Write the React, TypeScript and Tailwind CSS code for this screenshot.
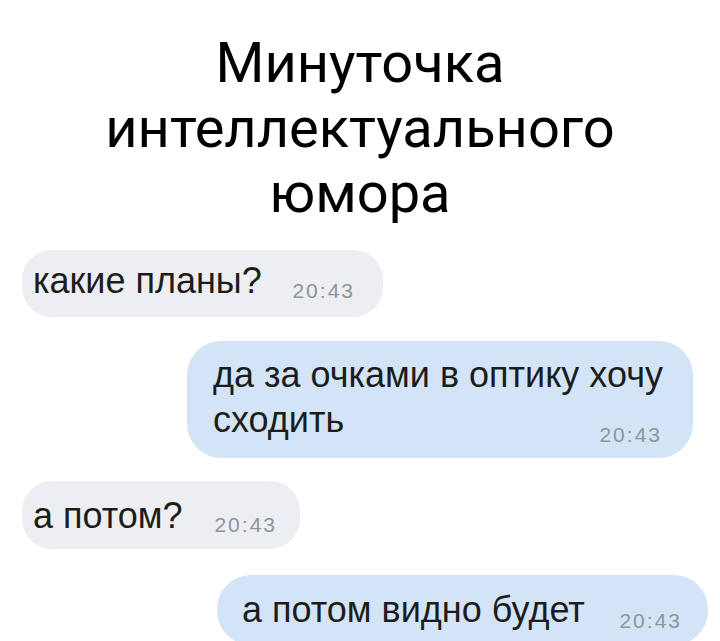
export default function App() {
  return (
    <div className="w-[720px] h-[641px] overflow-hidden bg-white">
      <h1
        className="pt-[31px] text-center text-[56px] leading-[65px] font-normal text-black"
        style={{ fontFamily: "Roboto, 'Noto Sans', sans-serif" }}
      >
        Минуточка
        <br />
        интеллектуального
        <br />
        юмора
      </h1>

      <div
        className="mt-[24px] flex flex-col whitespace-nowrap text-[#1c1c1c]"
        style={{ fontFamily: "'Liberation Sans', Arial, sans-serif" }}
      >
        {/* входящее */}
        <div className="ml-[22px] flex h-[67px] w-[361px] items-start justify-between rounded-[30px] bg-[#eceef1] pl-[11px] pr-[28px]">
          <span className="pt-[11px] text-[36px] leading-[40px]">какие планы?</span>
          <span className="mt-[29px] text-[21px] leading-[24px] tracking-[2px] text-[#8e949b]">20:43</span>
        </div>

        {/* исходящее */}
        <div className="ml-[187px] mt-[24px] flex h-[117px] w-[506px] flex-col rounded-[34px] bg-[#d3e4f6] pl-[26px] pr-[31px] pt-[11px] text-[36px] leading-[45px]">
          <span>да за очками в оптику хочу</span>
          <div className="flex items-start justify-between">
            <span>сходить</span>
            <span className="mt-[26px] text-[21px] leading-[24px] tracking-[2px] text-[#8e949b]">20:43</span>
          </div>
        </div>

        <div className="ml-[22px] mt-[23px] flex h-[68px] w-[278px] items-start justify-between rounded-[30px] bg-[#eceef1] pl-[11px] pr-[23px]">
          <span className="pt-[15px] text-[36px] leading-[40px]">а потом?</span>
          <span className="mt-[32px] text-[21px] leading-[24px] tracking-[2px] text-[#8e949b]">20:43</span>
        </div>

        <div className="ml-[217px] mt-[26px] flex h-[70px] w-[491px] items-start justify-between rounded-[34px] bg-[#d3e4f6] pl-[25px] pr-[26px]">
          <span className="pt-[15px] text-[36px] leading-[40px]">а потом видно будет</span>
          <span className="mt-[34px] text-[21px] leading-[24px] tracking-[2px] text-[#8e949b]">20:43</span>
        </div>
      </div>
    </div>
  );
}
